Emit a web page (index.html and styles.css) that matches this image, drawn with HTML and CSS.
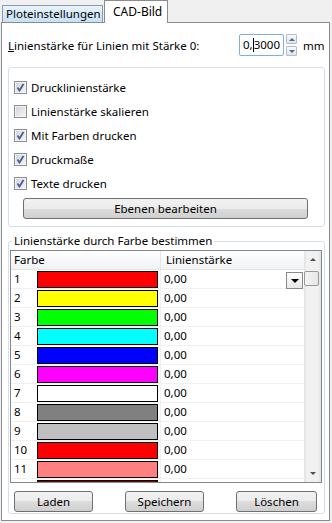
FILE: index.html
```html
<!DOCTYPE html>
<html lang="de">
<head>
    <meta charset="UTF-8">
    <meta name="viewport" content="width=device-width, initial-scale=1.0">
    <title>CAD-Bild</title>
    <link rel="stylesheet" href="styles.css">
</head>
<body>
    <div class="dialog">
        <div class="tabs">
            <div class="tab">Ploteinstellungen</div>
            <div class="tab active">CAD-Bild</div>
        </div>

        <div class="panel">
            <div class="width-row">
                <span class="width-label"><u>L</u>inienstärke für Linien mit Stärke 0:</span>
                <div class="num-input">0,<span class="caret"></span>3000</div>
                <div class="spinner">
                    <span class="spin up"></span>
                    <span class="spin down"></span>
                </div>
                <span class="unit">mm</span>
            </div>

            <div class="group options">
                <label class="check"><span class="box checked"></span>Drucklinienstärke</label>
                <label class="check"><span class="box"></span>Linienstärke skalieren</label>
                <label class="check"><span class="box checked"></span>Mit Farben drucken</label>
                <label class="check"><span class="box checked"></span>Druckmaße</label>
                <label class="check"><span class="box checked"></span>Texte drucken</label>
                <button class="btn layers">Ebenen bearbeiten</button>
            </div>

            <fieldset class="group colors">
                <legend>Linienstärke durch Farbe bestimmen</legend>
                <div class="list">
                    <div class="list-body">
                        <div class="list-head">
                            <span class="head-color">Farbe</span>
                            <span class="head-width">Linienstärke</span>
                        </div>
                        <div id="rows"></div>
                    </div>
                    <div class="scrollbar">
                        <span class="sb-btn sb-up"></span>
                        <span class="sb-track"><span class="sb-thumb"></span></span>
                        <span class="sb-btn sb-down"></span>
                    </div>
                </div>
                <div class="actions">
                    <button class="btn small">Laden</button>
                    <button class="btn small">Speichern</button>
                    <button class="btn small wider">Löschen</button>
                </div>
            </fieldset>
        </div>
    </div>

    <script>
        // Farbtabelle (die 12. Zeile ist nur angeschnitten sichtbar)
        const colors = ["#ff0000", "#ffff00", "#00ff00", "#00ffff", "#0000ff", "#ff00ff",
                        "#ffffff", "#808080", "#c0c0c0", "#ff0000", "#ff8080", "#7f0000"];
        const rows = document.getElementById("rows");

        colors.forEach((color, i) => {
            const row = document.createElement("div");
            const visible = i < 11;
            row.className = "list-row";
            row.innerHTML = `
                <span class="cell-num">${visible ? i + 1 : ""}</span>
                <span class="cell-color"><span class="swatch" style="background:${color}"></span></span>
                <span class="cell-width">${visible ? "0,00" : ""}${i === 0 ? '<span class="drop"></span>' : ''}</span>
            `;
            rows.appendChild(row);
        });
    </script>
</body>
</html>
```

FILE: styles.css
```css
* {
    box-sizing: border-box;
}
body {
    margin: 0;
    background: #f0f0f0;
    font-family: "Noto Sans", sans-serif;
    font-size: 11.5px;
    color: #000;
}
.dialog {
    width: 332px;
    height: 523px;
}

/* Reiter */
.tabs {
    display: flex;
    align-items: flex-end;
    height: 22px;
    padding-left: 2px;
}
.tab {
    width: 101px;
    height: 17px;
    line-height: 15px;
    padding-left: 3px;
    margin-right: 1px;
    border: 1px solid #8c9ba8;
    border-bottom: none;
    background: linear-gradient(#e8f3fc, #c8e1f5);
    white-space: nowrap;
    overflow: hidden;
}
.tab.active {
    position: relative;
    z-index: 1;
    width: 64px;
    height: 23px;
    line-height: 21px;
    padding-left: 8px;
    margin-bottom: -1px;
    border-color: #898c95;
    background: #fff;
    font-size: 12px;
}

.panel {
    width: 329px;
    height: 499px;
    margin-left: 1px;
    padding: 0 4px 0 6px;
    border: 1px solid #898c95;
    background: #fff;
}

/* Linienstärke-Zeile */
.width-row {
    display: flex;
    align-items: center;
    height: 22px;
    margin-top: 11px;
}
.width-label {
    width: 231px;
    white-space: nowrap;
}
.num-input {
    width: 45px;
    height: 22px;
    line-height: 20px;
    padding-left: 3px;
    border: 1px solid #7eb0de;
    border-radius: 2px;
}
.caret {
    display: inline-block;
    width: 1px;
    height: 14px;
    background: #000;
    vertical-align: -3px;
}
.spinner {
    display: flex;
    flex-direction: column;
    justify-content: space-between;
    width: 11px;
    height: 22px;
    margin: 0 6px 0 2px;
}
.spin {
    display: flex;
    align-items: center;
    justify-content: center;
    height: 10px;
    border: 1px solid #b4bcc6;
    border-radius: 1px;
    background: linear-gradient(#f7f8fa, #e1e5ea);
}
.spin::after {
    content: "";
    border-left: 3px solid transparent;
    border-right: 3px solid transparent;
}
.spin.up::after {
    border-bottom: 3px solid #4e6a95;
}
.spin.down::after {
    border-top: 3px solid #4e6a95;
}

/* Gruppen */
.group {
    width: 317px;
    border: 1px solid #d5dfe5;
    border-radius: 3px;
}
.options {
    height: 160px;
    margin-top: 11px;
    padding: 7px 0 0 5px;
}
.check {
    display: flex;
    align-items: center;
    gap: 4px;
    height: 24px;
}
.box {
    width: 13px;
    height: 13px;
    border: 1px solid #8e8f8f;
    background: linear-gradient(135deg, #cfd3d8, #f6f6f6);
    box-shadow: inset 0 0 0 1px #f2f2f2;
}
.box.checked {
    background-image: url("data:image/svg+xml,%3Csvg xmlns='http://www.w3.org/2000/svg' width='11' height='11'%3E%3Cpath d='M2.5 5.5 L4.5 8.5 L8.5 2' fill='none' stroke='%234a5f97' stroke-width='1.8'/%3E%3C/svg%3E"), linear-gradient(135deg, #cfd3d8, #f6f6f6);
}

.btn {
    height: 21px;
    padding: 0;
    border: 1px solid #707070;
    border-radius: 3px;
    background: linear-gradient(#f2f2f2 0%, #ebebeb 50%, #dddddd 50%, #cfcfcf 100%);
    font-family: inherit;
    font-size: 11.5px;
    color: #000;
}
.layers {
    width: 285px;
    margin: 3px 0 0 9px;
}

.colors {
    margin: 7px 0 0 0;
    padding: 2px 2px 1px 1px;
    min-width: 0;
}
.colors legend {
    margin-left: 2px;
    padding: 0 2px;
    line-height: 14px;
}

/* Liste */
.list {
    display: flex;
    height: 233px;
    border: 1px solid #828790;
}
.list-body {
    flex: 1;
    overflow: hidden;
}
.list-head {
    display: flex;
    height: 19px;
    line-height: 18px;
    border-bottom: 1px solid #e5e5e5;
    background: linear-gradient(#ffffff, #f1f2f4);
}
.head-color {
    width: 150px;
    padding-left: 3px;
    border-right: 1px solid #e5e5e5;
}
.head-width {
    padding-left: 5px;
}
.list-row {
    display: flex;
    height: 19px;
    border-bottom: 1px solid #f0f0f0;
}
.cell-num {
    width: 26px;
    padding-left: 3px;
    line-height: 18px;
}
.cell-color {
    display: flex;
    align-items: flex-end;
    width: 124px;
    border-right: 1px solid #f0f0f0;
}
.swatch {
    width: 121px;
    height: 17px;
    border: 1px solid #000;
}
.cell-width {
    display: flex;
    justify-content: space-between;
    flex: 1;
    padding: 0 1px 0 3px;
    line-height: 18px;
}
.drop {
    display: flex;
    align-items: center;
    justify-content: center;
    width: 17px;
    height: 17px;
    margin-top: 2px;
    border: 1px solid #8a8a8a;
    background: linear-gradient(#ffffff, #e8e8e8);
}
.drop::after {
    content: "";
    border-left: 4px solid transparent;
    border-right: 4px solid transparent;
    border-top: 4px solid #000;
}

.scrollbar {
    display: flex;
    flex-direction: column;
    width: 17px;
    background: linear-gradient(to right, #e2e2e2, #f1f1f1 3px, #f1f1f1 14px, #e2e2e2);
}
.sb-btn {
    display: flex;
    align-items: center;
    justify-content: center;
    height: 17px;
}
.sb-btn::after {
    content: "";
    border-left: 3px solid transparent;
    border-right: 3px solid transparent;
}
.sb-up::after {
    border-bottom: 3px solid #505050;
}
.sb-down::after {
    border-top: 3px solid #505050;
}
.sb-track {
    flex: 1;
    padding-top: 3px;
}
.sb-thumb {
    display: block;
    width: 15px;
    height: 15px;
    border: 1px solid #989898;
    border-radius: 2px;
    background: linear-gradient(to right, #f4f4f4, #e6e6e6);
}

.actions {
    display: flex;
    justify-content: space-between;
    margin-top: 8px;
    padding: 0 5px 0 4px;
}
.btn.small {
    width: 79px;
}
.btn.wider {
    width: 81px;
}
```
